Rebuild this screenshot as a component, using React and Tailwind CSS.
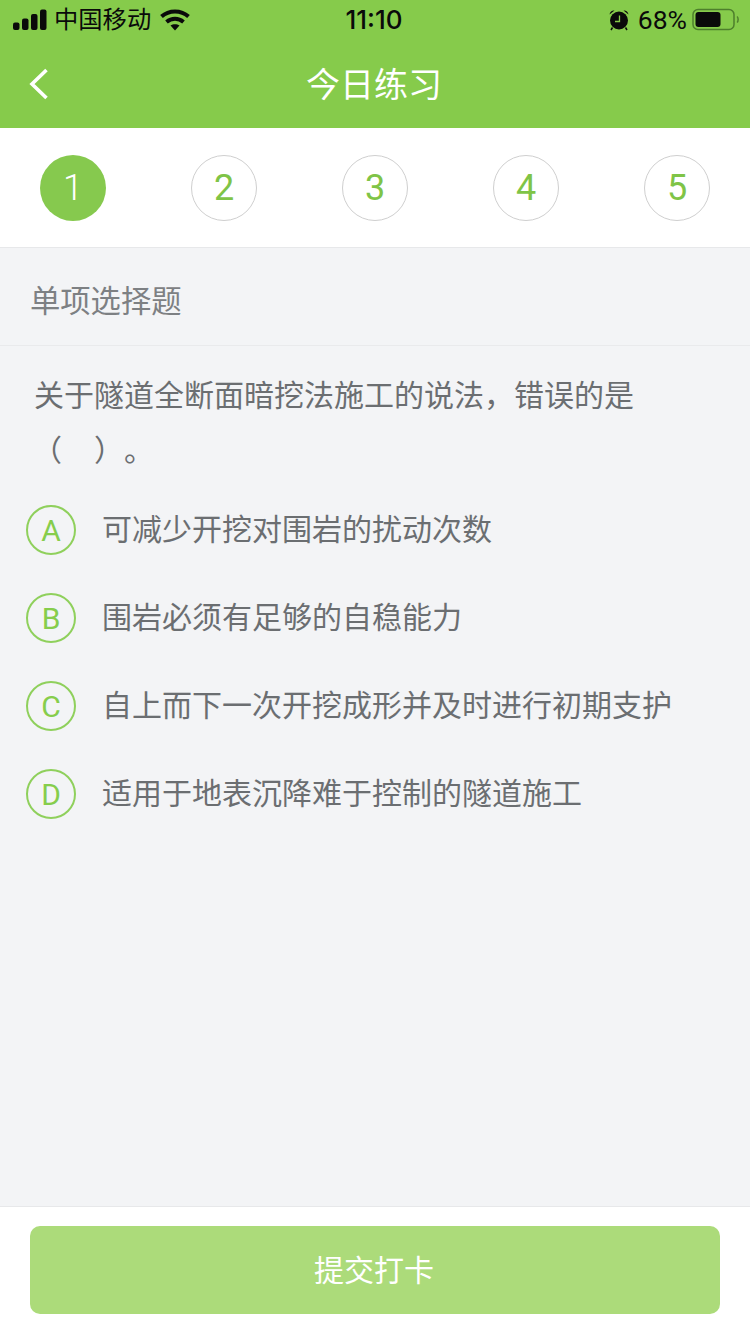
const CJK = "font-['Roboto','Noto_Sans_CJK_SC',sans-serif]";

const steps = [1, 2, 3, 4, 5];
const options = [
  { key: 'A', text: '可减少开挖对围岩的扰动次数' },
  { key: 'B', text: '围岩必须有足够的自稳能力' },
  { key: 'C', text: '自上而下一次开挖成形并及时进行初期支护' },
  { key: 'D', text: '适用于地表沉降难于控制的隧道施工' },
];

function Signal() {
  return (
    <svg width="35" height="22" viewBox="0 0 35 22" fill="#0a0a0a">
      <rect x="0" y="13.500" width="6.500" height="7.500" rx="2" />
      <rect x="9" y="9.500" width="6.500" height="11.500" rx="2" />
      <rect x="18" y="5" width="6.500" height="16" rx="2" />
      <rect x="27" y="0.500" width="6.500" height="20.500" rx="2" />
    </svg>
  );
}

function Wifi() {
  return (
    <svg width="30" height="22" viewBox="0 0 30 22" fill="none" stroke="#0a0a0a" strokeWidth="4">
      <path d="M1.500 7.500C9 .7 21 .7 28.500 7.500" />
      <path d="M6.500 13C11.500 8.800 18.500 8.800 23.500 13" />
      <path d="M15 21.500L10.500 16.500C13 14.700 17 14.700 19.500 16.500Z" fill="#0a0a0a" stroke="none" />
    </svg>
  );
}

function Alarm() {
  return (
    <svg width="22" height="22" viewBox="0 0 22 22">
      <circle cx="11" cy="11.500" r="9" fill="#0a0a0a" />
      <path d="M1.500 5.500C2 2.500 4.500 1 6.500 1.500ZM20.500 5.500C20 2.500 17.500 1 15.500 1.500Z" fill="#0a0a0a" />
      <path d="M4.500 18.500L3 21M17.500 18.500L19 21" stroke="#0a0a0a" strokeWidth="1.500" />
      <path d="M11.500 6.500V12.500H7" fill="none" stroke="#86cb4b" strokeWidth="1.300" />
    </svg>
  );
}

function Battery() {
  return (
    <svg width="48" height="24" viewBox="0 0 48 24">
      <rect x="1" y="1.500" width="41" height="20" rx="5" fill="none" stroke="#4e7f2c" strokeWidth="1.500" />
      <rect x="3.500" y="4" width="25" height="15" rx="3" fill="#0a0a0a" />
      <path d="M45 8.500C46.500 9.500 46.500 13.500 45 14.500" fill="none" stroke="#4e7f2c" strokeWidth="1.500" />
    </svg>
  );
}

export default function App() {
  return (
    <div className={`flex h-[1334px] w-[750px] flex-col overflow-hidden bg-[#f3f4f6] ${CJK}`}>
      <header className="bg-[#86cb4b]">
        <div className="flex h-[40px] items-center pl-[13px] pr-[10px] text-[#0a0a0a]">
          <div className="flex w-[300px] items-center">
            <Signal />
            <span className="ml-[6px] text-[24.300px] leading-none">中国移动</span>
            <span className="ml-[9px] flex"><Wifi /></span>
          </div>
          <div className="w-[124px] pr-[2px] text-center font-['Inter',sans-serif] text-[26px] font-medium leading-none">11:10</div>
          <div className="ml-auto flex items-center">
            <Alarm />
            <span className="ml-[8px] text-[26.500px] font-normal leading-none">68%</span>
            <span className="ml-[5px] flex"><Battery /></span>
          </div>
        </div>
        <div className="relative flex h-[88px] items-center justify-center pr-[2px]">
          <svg className="absolute left-[28px] top-[28px]" width="22" height="32" viewBox="0 0 22 32" fill="none" stroke="#fff" strokeWidth="3.600">
            <path d="M18.500 2L4 16L18.500 30" />
          </svg>
          <h1 className="pt-[2px] text-[34px] font-normal leading-none text-white">今日练习</h1>
        </div>
      </header>

      <div className="flex h-[120px] items-center justify-between border-b border-[#e7e8ea] bg-white px-[40px]">
        {steps.map((n) => (
          <div
            key={n}
            className={
              n === 1
                ? 'flex h-[66px] w-[66px] items-center justify-center rounded-full bg-[#86c94e] text-[36px] font-light text-white'
                : 'flex h-[66px] w-[66px] items-center justify-center rounded-full border border-[#cfcfcf] bg-white text-[36px] font-normal text-[#7fc447]'
            }
          >
            {n}
          </div>
        ))}
      </div>

      <div className="flex h-[98px] items-center border-b border-[#e9eaec] pl-[30px] pt-[10px] text-[30.300px] text-[#7d8083]">单项选择题</div>

      <main className="flex-1 pt-[22px]">
        <p className="pl-[34px] pr-[110px] text-[30px] leading-[55px] text-[#6b6e71]">
          关于隧道全断面暗挖法施工的说法，错误的是
        </p>
        <p className="flex pl-[32px] text-[30px] leading-[55px] text-[#6b6e71]">
          <span>（</span>
          <span className="ml-[32px]">）</span>
          <span>。</span>
        </p>
        <ul className="mt-[27px] flex flex-col gap-[38px] pl-[26px]">
          {options.map((o) => (
            <li key={o.key} className="flex h-[50px] items-center">
              <span className="flex h-[50px] w-[50px] items-center justify-center rounded-full border-2 border-[#8fd05c] text-[30px] font-normal text-[#86cd4c]">
                {o.key}
              </span>
              <span className="ml-[26px] text-[30px] leading-none text-[#6b6e71]">{o.text}</span>
            </li>
          ))}
        </ul>
      </main>

      <footer className="h-[128px] border-t border-[#e7e8ea] bg-white px-[30px] pt-[19px]">
        <button className="flex h-[88px] w-full items-center justify-center rounded-[10px] bg-[#acdb7a] pr-[2px] text-[30px] text-white">提交打卡</button>
      </footer>
    </div>
  );
}
